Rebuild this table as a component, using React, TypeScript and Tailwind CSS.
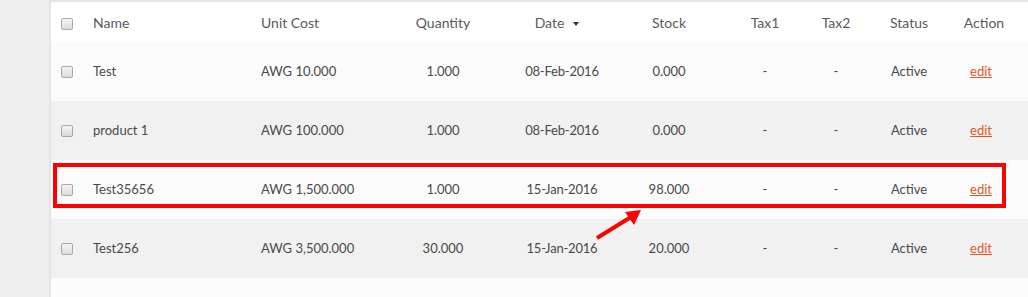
const ROWS = [
  { name: "Test", cost: "AWG 10.000", qty: "1.000", date: "08-Feb-2016", stock: "0.000" },
  { name: "product 1", cost: "AWG 100.000", qty: "1.000", date: "08-Feb-2016", stock: "0.000" },
  { name: "Test35656", cost: "AWG 1,500.000", qty: "1.000", date: "15-Jan-2016", stock: "98.000" },
  { name: "Test256", cost: "AWG 3,500.000", qty: "30.000", date: "15-Jan-2016", stock: "20.000" },
]

function Check() {
  return (
    <span className="inline-block h-[12px] w-[12px] rounded-[2px] border border-[#a9a9a9] bg-gradient-to-b from-[#f4f4f4] to-[#dcdcdc] align-middle" />
  )
}

export default function App() {
  return (
    <div className="flex h-[297px] w-[1028px] overflow-hidden bg-[#f0f0f0] font-['Lato',sans-serif]">
      <div className="w-[49px] shrink-0 bg-[#efefef]" />
      <div className="relative flex-1 border-l-2 border-[#e4e4e4] bg-[#fcfcfc]">
        <div className="h-[2px] bg-[#e6e6e6]" />
        <table className="w-full table-fixed border-collapse">
          <colgroup>
            <col className="w-[32px]" />
            <col className="w-[168px]" />
            <col className="w-[130px]" />
            <col className="w-[124px]" />
            <col className="w-[114px]" />
            <col className="w-[100px]" />
            <col className="w-[92px]" />
            <col className="w-[50px]" />
            <col className="w-[96px]" />
            <col className="w-[54px]" />
            <col />
          </colgroup>
          <thead>
            <tr className="h-[40px] bg-white text-[14px] text-[#5a5a5a]">
              <th className="text-center font-normal"><Check /></th>
              <th className="pl-[10px] text-left font-normal">Name</th>
              <th className="pl-[10px] text-left font-normal">Unit Cost</th>
              <th className="text-center font-normal">Quantity</th>
              <th className="pr-[10px] text-center font-normal">
                Date
                <span className="ml-[9px] inline-block h-0 w-0 border-x-[3px] border-t-[4px] border-x-transparent border-t-[#333] align-middle" />
              </th>
              <th className="text-center font-normal">Stock</th>
              <th className="text-center font-normal">Tax1</th>
              <th className="text-center font-normal">Tax2</th>
              <th className="text-center font-normal">Status</th>
              <th className="text-center font-normal">Action</th>
              <th />
            </tr>
          </thead>
          <tbody className="text-[13px] text-[#4a4a4a]">
            {ROWS.map((r, i) => (
              <tr key={r.name} className={i % 2 === 1 ? "h-[59px] bg-[#f1f1f1]" : "h-[59px] bg-[#fbfbfb]"}>
                <td className="text-center"><Check /></td>
                <td className="pl-[10px]">{r.name}</td>
                <td className="pl-[10px]">{r.cost}</td>
                <td className="text-center">{r.qty}</td>
                <td className="text-center tracking-[-0.2px]">{r.date}</td>
                <td className="text-center">{r.stock}</td>
                <td className="text-center">-</td>
                <td className="text-center">-</td>
                <td className="text-center">Active</td>
                <td className="pr-[6px] text-center">
                  <a href="#" className="text-[#e8561e] underline">edit</a>
                </td>
                <td />
              </tr>
            ))}
          </tbody>
        </table>

        {/* annotation */}
        <div className="absolute left-[2px] top-[163px] h-[45px] w-[953px] border-4 border-[#ff0000]" />
        <svg className="absolute left-[544px] top-[207px]" width="50" height="34" viewBox="0 0 50 34">
          <line x1="2" y1="31" x2="36" y2="10" stroke="#ff0000" strokeWidth="4" />
          <polygon points="46,3 30,5 39,18" fill="#ff0000" />
        </svg>
      </div>
    </div>
  )
}
